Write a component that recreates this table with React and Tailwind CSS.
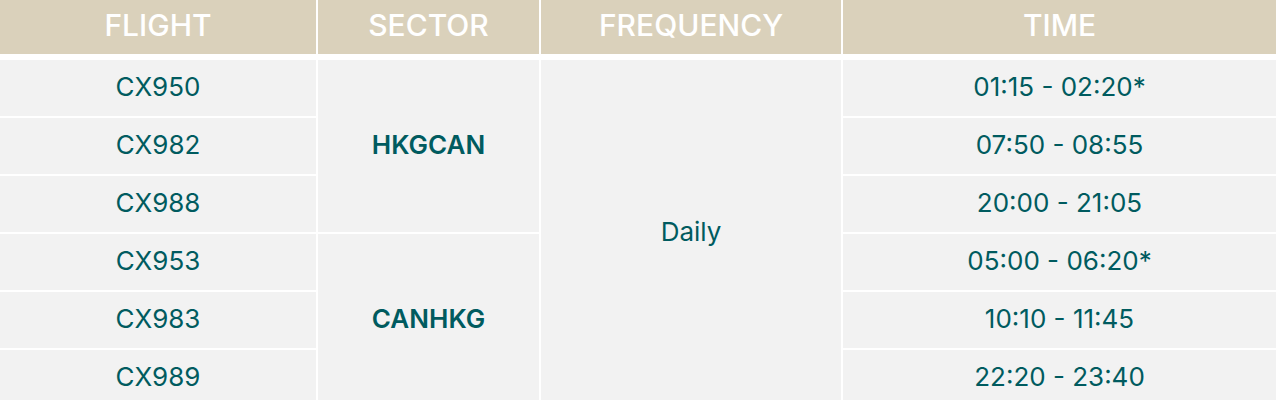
const flights = [
  { no: "CX950", time: "01:15 - 02:20*" },
  { no: "CX982", time: "07:50 - 08:55" },
  { no: "CX988", time: "20:00 - 21:05" },
  { no: "CX953", time: "05:00 - 06:20*" },
  { no: "CX983", time: "10:10 - 11:45" },
  { no: "CX989", time: "22:20 - 23:40" },
];

const cell = "flex items-center justify-center bg-[#f2f2f2] pb-[3px] text-[#005b5f]";
const head = "flex items-center justify-center bg-[#dad1bb] pb-[3px]";

export default function App() {
  return (
    <div className="w-[1276px] bg-white font-['Inter',sans-serif] text-[26px]">
      <div className="grid h-[54px] grid-cols-[316px_221px_300px_1fr] gap-x-[2px] bg-white text-[30px] font-medium uppercase text-white">
        <div className={head}>Flight</div>
        <div className={head}>Sector</div>
        <div className={head}>Frequency</div>
        <div className={head}>Time</div>
      </div>
      <div className="mt-[6px] grid grid-cols-[316px_221px_300px_1fr] grid-rows-[repeat(6,56px)] gap-[2px]">
        {flights.map((f, i) => (
          <div key={f.no} className={cell} style={{ gridColumn: 1, gridRow: i + 1 }}>
            {f.no}
          </div>
        ))}
        <div className={`${cell} col-start-2 row-span-3 row-start-1 font-semibold`}>HKGCAN</div>
        <div className={`${cell} col-start-2 row-span-3 row-start-4 font-semibold`}>CANHKG</div>
        <div className={`${cell} col-start-3 row-span-6 row-start-1`}>Daily</div>
        {flights.map((f, i) => (
          <div key={f.time} className={cell} style={{ gridColumn: 4, gridRow: i + 1 }}>
            {f.time}
          </div>
        ))}
      </div>
    </div>
  );
}
